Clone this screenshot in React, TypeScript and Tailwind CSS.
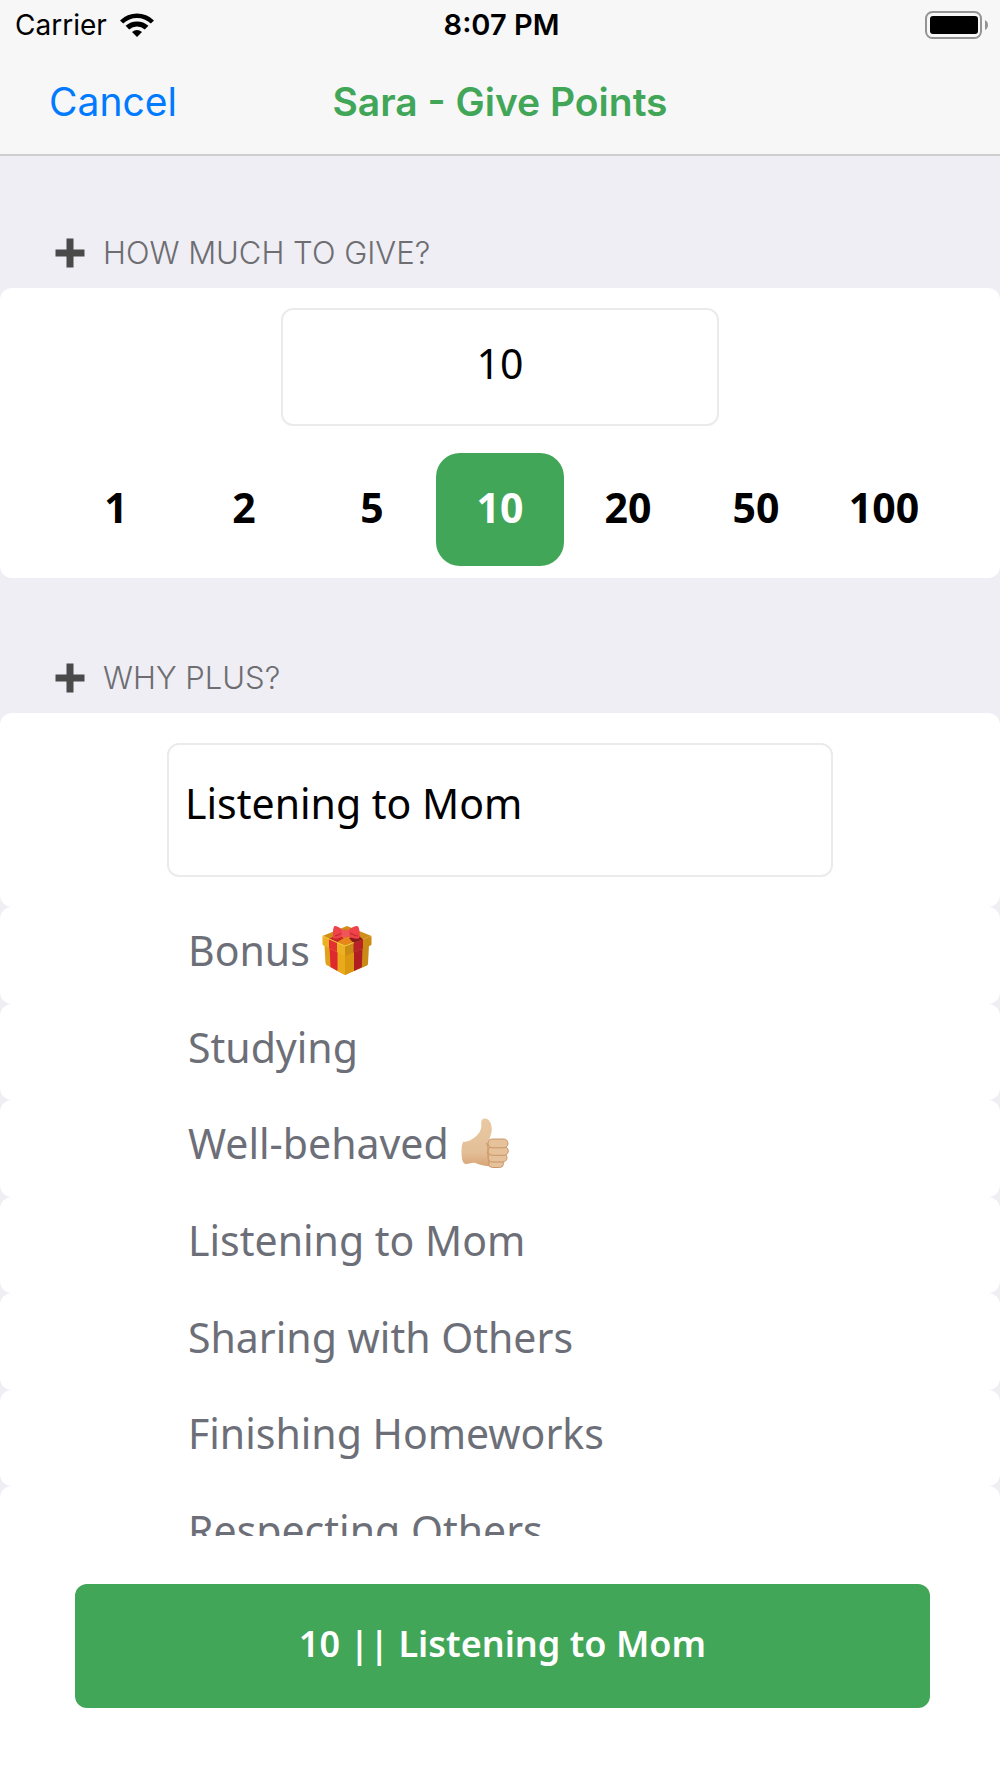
import { useState } from "react";
import clsx from "clsx";

const AMOUNTS = [1, 2, 5, 10, 20, 50, 100];

type Reason = {
  label: string;
  icon?: "gift" | "thumb";
};

const REASONS: Reason[] = [
  { label: "Bonus", icon: "gift" },
  { label: "Studying" },
  { label: "Well-behaved", icon: "thumb" },
  { label: "Listening to Mom" },
  { label: "Sharing with Others" },
  { label: "Finishing Homeworks" },
  { label: "Respecting Others" },
];

function WifiIcon() {
  return (
    <svg viewBox="0 0 34 24" className="h-6 w-[34px]" aria-hidden="true">
      <path d="M0 7.4A24.5 24.5 0 0 1 34 7.4L30.8 10.6A20 20 0 0 0 3.2 10.6Z" />
      <path d="M5.6 12.8A17 17 0 0 1 28.4 12.8L24.8 16.4A12 12 0 0 0 9.2 16.4Z" />
      <path d="M12 19A8 8 0 0 1 22 19L17 24Z" />
    </svg>
  );
}

function BatteryIcon() {
  return (
    <svg viewBox="0 0 63 28" className="h-7 w-[63px]" aria-hidden="true">
      <rect x="1" y="1" width="55" height="26" rx="6.5" fill="none" stroke="#949496" strokeWidth="2" />
      <rect x="5" y="5" width="48" height="18" rx="3" />
      <path d="M60 9Q63 10.500 63 14T60 19Z" fill="#949496" />
    </svg>
  );
}

function PlusIcon() {
  return (
    <svg viewBox="0 0 30 30" className="h-[30px] w-[30px] shrink-0" aria-hidden="true">
      <path d="M11.500 0.500H18.500V11.500H29.500V18.500H18.500V29.500H11.500V18.500H0.500V11.500H11.500Z" fill="#4a4a4a" />
    </svg>
  );
}

function GiftIcon() {
  return (
    <svg viewBox="0 0 50 50" className="h-[50px] w-[50px]" aria-hidden="true">
      <path d="M2.500 20L23 30V50L4.500 40Q3.500 39 3.400 37Z" fill="#e3a01b" />
      <path d="M23 30L47 20L46 38.500Q46 40 45 40.600L23 50Z" fill="#c98a16" />
      <path d="M15.500 27L23 30V50L15.500 46Z" fill="#eba91c" />
      <path d="M23 30L32 26.500V45.500L23 50Z" fill="#d9980f" />
      <path d="M7.500 22L15.500 26V46L8.500 42Z" fill="#dd2a2e" />
      <path d="M32 26.500L40.500 23L39.800 42.300L32 46Z" fill="#b01d22" />
      <path d="M0.500 11L25 1L49.500 11L23 21Z" fill="#cf8f17" />
      <path d="M14 15L30 9L38 14L23 20Z" fill="#e8861c" />
      <path d="M0.500 11L23 21V31L1.500 20.500Q0.500 20 0.500 19Z" fill="#edb022" />
      <path d="M23 21L49.500 11V19Q49.500 20 48.500 20.500L23 31Z" fill="#cb8c14" />
      <path d="M7 13.800L15 17.300V27L7 23.300Z" fill="#e33033" />
      <path d="M31.500 18L41 14.500V23.500L31.500 27.500Z" fill="#b92226" />
      <path d="M7 13.800L15 10L22 13L15 17.300Z" fill="#c62529" />
      <path d="M31.500 18L27 13L36 10L41 14.500Z" fill="#8e191b" />
      <path d="M0.500 11L23 21L32 17.500" fill="none" stroke="#f7c83b" strokeWidth="1" />
      <path d="M20.500 5C17 2 14 0.500 12.500 1C11 2 10.500 9 11 13C14 14.500 18 13 21 11Z" fill="#ed4349" />
      <path d="M26.500 5C30 2 34 0.500 35.500 1C37.500 2 38 9 37.500 13C35 14.800 30 13 26 11Z" fill="#ed4349" />
      <path d="M13 11C15 11 18 9 20 8M36 11C33 11 30 9 28 8" fill="none" stroke="#c82c34" strokeWidth="1.200" />
      <rect x="19.500" y="4.500" width="8" height="8" rx="3.500" fill="#f0555a" />
    </svg>
  );
}

function ThumbIcon() {
  return (
    <svg viewBox="0 0 48 50" className="h-[50px] w-12" aria-hidden="true">
      <defs>
        <linearGradient id="skin" x1="0" y1="0" x2="0" y2="1">
          <stop offset="0" stopColor="#e9c9a3" />
          <stop offset="0.7" stopColor="#e3bf98" />
          <stop offset="1" stopColor="#d8a577" />
        </linearGradient>
      </defs>
      <path
        d="M2.500 23.500C6 24.500 10 22 13.500 19.500C18 16 20.500 12 20.300 7.500C20 3 20.500 0.500 24 0.500C28.500 0.500 30.800 6 30.800 11.500C30.800 15 29 18.500 28.500 21.500L33 24V48C26 48.500 19 47.500 14.500 45C10 44 7.500 46.500 4.500 46C1.500 45.500 0.500 40 0.500 34C0.500 29 1 25.500 2.500 23.500Z"
        fill="url(#skin)"
      />
      <g fill="#e6c29b" stroke="#c58f62" strokeWidth="0.900">
        <rect x="27.500" y="41.500" width="15" height="8" rx="4" />
        <rect x="27" y="35.500" width="19" height="8.500" rx="4.200" />
        <rect x="27" y="28.500" width="20.300" height="8.800" rx="4.400" />
        <rect x="27" y="21" width="20" height="8.800" rx="4.400" />
      </g>
      <path d="M25 25C27 27 27.500 31 26.500 35C28 39 27.500 43 28 46" fill="none" stroke="#cf9c6f" strokeWidth="1.200" />
    </svg>
  );
}

function StatusBar() {
  return (
    <div className="grid h-[50px] grid-cols-[1fr_auto_1fr] items-center pl-[15px] pr-3 text-[28px] leading-8">
      <div className="flex items-center gap-[13px]">
        <span>Carrier</span>
        <WifiIcon />
      </div>
      <span className="text-center text-[29px] font-semibold">8:07 PM</span>
      <div className="flex justify-end">
        <BatteryIcon />
      </div>
    </div>
  );
}

function SectionTitle({ htmlFor, children }: { htmlFor: string; children: string }) {
  return (
    <h2 className="flex items-center gap-[18px] px-[55px] pb-[15px] text-[31px] leading-10 text-[#6d6d72]">
      <PlusIcon />
      <label htmlFor={htmlFor} className="font-light uppercase">
        {children}
      </label>
    </h2>
  );
}

export default function App() {
  const [amount, setAmount] = useState("10");
  const [reason, setReason] = useState("Listening to Mom");

  return (
    <div className="flex h-screen flex-col bg-[#efeef4] font-['Inter',sans-serif] text-black">
      <header className="shrink-0 border-b-2 border-[#cdcdd0] bg-[#f7f7f8]">
        <StatusBar />
        <nav className="grid h-[104px] grid-cols-[1fr_auto_1fr] items-center px-[49px] text-[39px] leading-[48px]">
          <button type="button" className="justify-self-start text-[#007aff]">
            Cancel
          </button>
          <h1 className="font-semibold text-[#42a658]">Sara - Give Points</h1>
        </nav>
      </header>

      <main className="min-h-0 flex-1 overflow-y-auto [scrollbar-width:none]">
        <section className="pt-[77px]">
          <SectionTitle htmlFor="amount">How much to give?</SectionTitle>
          <div className="rounded-xl bg-white px-[52px] pb-3 pt-5">
            <input
              id="amount"
              inputMode="numeric"
              value={amount}
              onChange={(e) => setAmount(e.target.value)}
              className="mx-auto block h-[118px] w-[438px] max-w-full rounded-xl border-2 border-[#ebebeb] pb-2 text-center font-['Noto_Sans',sans-serif] text-[41px] outline-none"
            />
            <div className="mt-[27px] grid grid-cols-7">
              {AMOUNTS.map((n) => (
                <button
                  key={n}
                  type="button"
                  onClick={() => setAmount(String(n))}
                  className={clsx(
                    "h-[113px] rounded-3xl pb-1 text-center font-['Open_Sans',sans-serif] text-[41px] font-bold",
                    amount === String(n) && "bg-[#42a658] text-white"
                  )}
                >
                  {n}
                </button>
              ))}
            </div>
          </div>
        </section>

        <section className="pt-20">
          <SectionTitle htmlFor="reason">Why plus?</SectionTitle>
          <div className="rounded-xl bg-white px-[167px] py-[30px]">
            <textarea
              id="reason"
              value={reason}
              onChange={(e) => setReason(e.target.value)}
              className="block h-[134px] w-full resize-none rounded-xl border-2 border-[#ebebeb] px-4 pt-[31px] font-['Noto_Sans',sans-serif] text-[41px] leading-[54px] outline-none"
            />
          </div>
          <ul className="grid h-[676px] grid-rows-7">
            {REASONS.map((item) => (
              <li key={item.label} className="rounded-xl bg-white">
                <button
                  type="button"
                  onClick={() => setReason(item.label)}
                  className="flex h-full w-full items-center gap-3 pb-[10px] pl-[188px] text-left font-['Noto_Sans',sans-serif] text-[41px] leading-[54px] text-[#6d6f78]"
                >
                  {item.label}
                  {item.icon === "gift" && <GiftIcon />}
                  {item.icon === "thumb" && <ThumbIcon />}
                </button>
              </li>
            ))}
          </ul>
        </section>
      </main>

      <footer className="shrink-0 bg-white pb-[70px] pl-[75px] pr-[70px] pt-12">
        <button
          type="button"
          className="h-[124px] w-full rounded-xl bg-[#42a658] pb-1 font-['Noto_Sans',sans-serif] text-[36px] font-semibold text-white"
        >
          {amount} || {reason}
        </button>
      </footer>
    </div>
  );
}
